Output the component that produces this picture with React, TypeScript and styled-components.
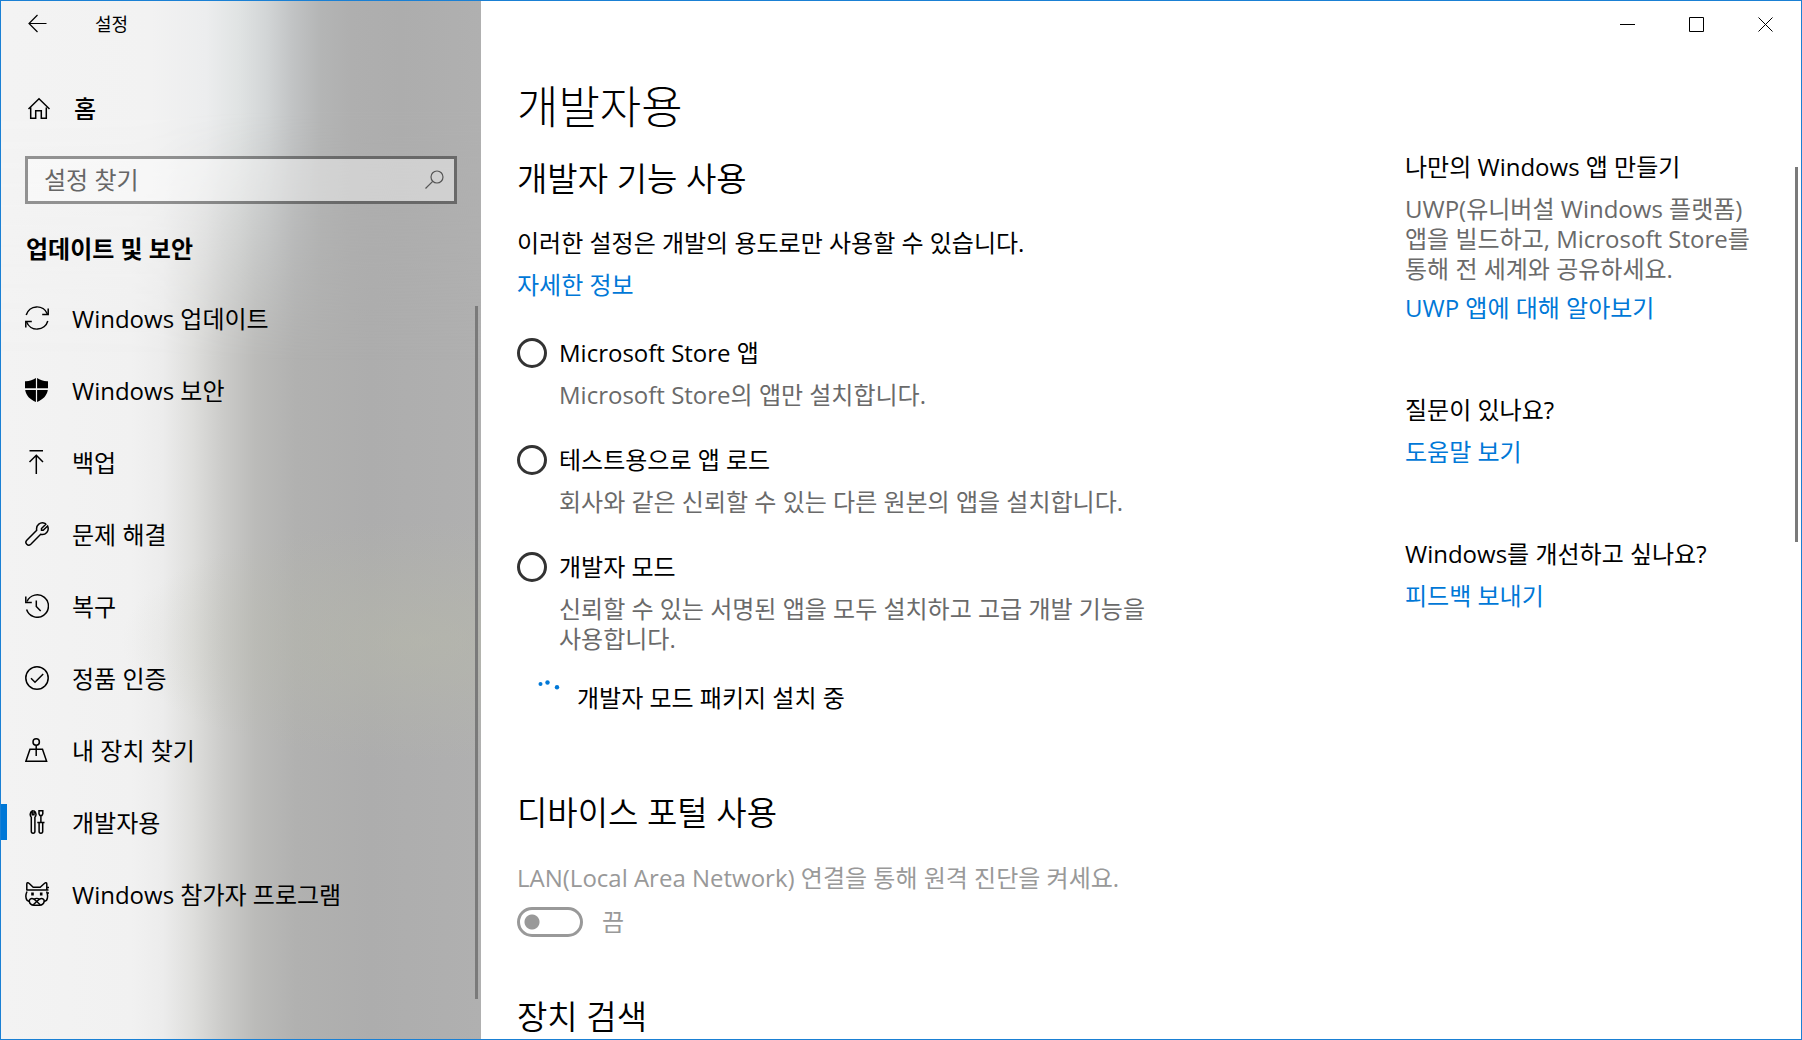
import React, { useState } from 'react';
import styled, { createGlobalStyle, css } from 'styled-components';

const accent = '#0078d7';

const GlobalStyle = createGlobalStyle`
  *, *::before, *::after { box-sizing: border-box; }
  body {
    margin: 0;
    background: #fff;
    color: #000;
    font-family: "Open Sans", "Noto Sans CJK KR", sans-serif;
    font-size: 24px;
    line-height: 30px;
    word-break: keep-all;
  }
  h1, h2, h3, p, ul { margin: 0; padding: 0; font-weight: inherit; }
  button, input { font: inherit; color: inherit; }
`;

const Window = styled.div`
  display: flex;
  height: 100vh;
  overflow: hidden;
  border: 1px solid #1a80d4;
`;

const Sidebar = styled.aside`
  position: relative;
  isolation: isolate;
  flex: none;
  display: flex;
  flex-direction: column;
  width: 480px;
  background:
    radial-gradient(ellipse 300px 120px at 420px 640px, rgba(184, 186, 170, 0.5), rgba(184, 186, 170, 0)),
    linear-gradient(90deg, #f3f3f3 0, #f1f1f1 130px, #ececec 162px, #dededc 192px, #cbcbc9 222px, #bbbbb9 254px, #b1b1b0 295px, #adadad 370px, #b0b0b0 100%);
  &::before {
    content: '';
    position: absolute;
    z-index: -1;
    inset: 0 0 auto;
    height: 360px;
    background: linear-gradient(90deg, #f3f3f3 0, #f2f2f2 150px, #ecedee 205px, #e0e3e3 238px, #d2d5d6 266px, #c1c3c4 292px, #b4b5b5 320px, #afafaf 350px, #adadad 400px, #b0b0b0 100%);
    mask-image: linear-gradient(#000 0, #000 110px, transparent 100%);
  }
`;

const TitleBar = styled.header`
  display: flex;
  align-items: center;
  height: 46px;
  padding-left: 23px;
  gap: 47px;
  font-size: 18px;
`;

const IconButton = styled.button`
  display: flex;
  padding: 0;
  border: 0;
  background: none;
`;

const HomeLink = styled.a`
  display: flex;
  align-items: center;
  gap: 23px;
  height: 72px;
  margin-top: 26px;
  padding-left: 26px;
  color: inherit;
  font-weight: 500;
  text-decoration: none;
`;

const SearchBox = styled.label`
  display: flex;
  align-items: center;
  height: 48px;
  margin: 11px 24px 0 24px;
  padding: 0 8px 0 16px;
  border: 3px solid rgba(0, 0, 0, 0.4);
  background: rgba(255, 255, 255, 0.42);
  background-clip: padding-box;
  svg { color: #555; }
`;

const SearchInput = styled.input`
  flex: 1;
  min-width: 0;
  padding: 0;
  border: 0;
  outline: 0;
  background: none;
  &::placeholder { color: #666; opacity: 1; }
`;

const SideHeading = styled.h2`
  margin: 30px 0 18px;
  padding-left: 25px;
  font-size: 24px;
  font-weight: 700;
`;

const NavList = styled.ul`
  list-style: none;
`;

const NavLink = styled.a<{ $active?: boolean }>`
  display: flex;
  align-items: center;
  gap: 23px;
  height: 72px;
  padding-left: 24px;
  color: inherit;
  text-decoration: none;
  ${(p) =>
    p.$active &&
    css`
      background: linear-gradient(${accent}, ${accent}) left center / 6px 36px no-repeat;
    `}
`;

const NavLabel = styled.span`
  padding-top: 2px;
`;

const Glyph = styled.svg`
  flex: none;
  display: block;
  width: 24px;
  height: 24px;
  fill: none;
  stroke: currentColor;
  stroke-width: 1.5;
`;

const ScrollThumb = styled.div<{ $top: number; $height: number; $right: number }>`
  position: absolute;
  top: ${(p) => p.$top}px;
  right: ${(p) => p.$right}px;
  width: 3px;
  height: ${(p) => p.$height}px;
  background: #7a7a7a;
`;

const Main = styled.main`
  position: relative;
  flex: 1;
  display: flex;
  flex-direction: column;
  min-width: 0;
`;

const Caption = styled.div`
  display: flex;
  justify-content: flex-end;
  height: 46px;
  padding-right: 1px;
`;

const CaptionButton = styled(IconButton)`
  align-items: center;
  justify-content: center;
  width: 69px;
  svg { width: 15px; height: 15px; stroke-width: 1; }
`;

const Page = styled.div`
  flex: 1;
  display: grid;
  grid-template-columns: minmax(0, 1fr) 396px;
  min-height: 0;
  padding-left: 36px;
`;

const Content = styled.div`
  overflow: hidden;
  height: 100%;
`;

const PageTitle = styled.h1`
  margin-top: 30px;
  font-size: 45px;
  font-weight: 300;
  line-height: 60px;
`;

const SectionTitle = styled.h2<{ $gap: number }>`
  margin-top: ${(p) => p.$gap}px;
  font-size: 33px;
  font-weight: 350;
  line-height: 40px;
`;

const Text = styled.p<{ $tone?: string; $gap?: number }>`
  margin-top: ${(p) => p.$gap ?? 0}px;
  color: ${(p) => p.$tone ?? 'inherit'};
`;

const TextLink = styled.a<{ $gap: number }>`
  display: table;
  margin-top: ${(p) => p.$gap}px;
  color: ${accent};
  text-decoration: none;
`;

const Options = styled.div`
  display: grid;
  gap: 35px;
  margin-top: 38px;
`;

const Option = styled.label`
  display: grid;
  grid-template-columns: 30px minmax(0, 620px);
  gap: 12px 12px;
  small { grid-column: 2; font-size: 24px; color: #6a6a6a; }
`;

const Radio = styled.input`
  appearance: none;
  width: 30px;
  height: 30px;
  margin: 0;
  border: 3px solid #333;
  border-radius: 50%;
  &:checked { background: radial-gradient(#333 7px, transparent 8px); }
`;

const Progress = styled.div`
  display: flex;
  gap: 10px;
  margin-top: 29px;
  padding-left: 20px;
`;

const Dots = styled.svg`
  width: 30px;
  height: 30px;
  overflow: visible;
  fill: ${accent};
`;

const ToggleRow = styled.label`
  display: flex;
  align-items: center;
  gap: 19px;
  margin-top: 14px;
  color: #999;
`;

const Toggle = styled.input`
  appearance: none;
  width: 66px;
  height: 30px;
  margin: 0;
  border: 3px solid #999;
  border-radius: 15px;
  background: radial-gradient(circle at 12px 12px, #999 7px, transparent 8px);
`;

const Help = styled.aside`
  padding: 105px 46px 0 0;
`;

const HelpBlock = styled.section`
  & + & { margin-top: 72px; }
  h3 { font-size: 24px; }
`;

const icons = {
  back: <path d="M22.500 11.500H5M13.500 3l-8.500 8.500 8.500 8.500" strokeWidth="1.200" />,
  home: <path d="M4 12 14.500 1.700 25 12M6.200 10.500v10.800h5v-7.500h5.600v7.500h5V10.500" transform="translate(-2.500 0)" />,
  search: (
    <>
      <circle cx="15" cy="9" r="6" strokeWidth="1.200" />
      <path d="M10.700 13.300 3.500 20.500" strokeWidth="1.200" />
    </>
  ),
  update: (
    <>
      <path d="M1.200 9A11.200 11.200 0 0 1 22.400 8M22.800 15A11.200 11.200 0 0 1 1.600 16" />
      <path d="M23.200 2.500V8.500H17.200M.8 21.500V15.500H6.800" />
    </>
  ),
  shield: (
    <path
      fill="currentColor"
      stroke="none"
      d="M0 3.200C4 3.400 8 2.200 10.900 0V10.300H0ZM12.100 0C15 2.200 19 3.400 23 3.200V10.300H12.100ZM.2 12H10.900V24C5 21.500 1 17.500.2 12ZM12.100 12H22.800C22 17.500 18 21.500 12.100 24Z"
    />
  ),
  backup: <path d="M4.500.8H18M11.300 24V5M4.500 12 11.300 5.200 18 12" />,
  wrench: (
    <path d="M20.800 2.200 16.500 6.500V8.200H18.200L22.600 4C24.700 8.800 20.500 13.500 15.700 12.300L5.800 22.200C3 24.800-.8 21 1.800 18.200L11.700 8.300C10.700 3 15.500-.6 20 1.400Z" />
  ),
  recovery: (
    <>
      <path d="M1.600 15.500A11.200 11.200 0 1 0 2 7.500" />
      <path d="M.8 2.500V8.500H6.800M11.300 6.500V12.500L15.700 17" />
    </>
  ),
  activation: (
    <>
      <circle cx="12" cy="12" r="11.200" />
      <path d="M6 12.300 10 16.300 18.200 8" />
    </>
  ),
  device: (
    <>
      <circle cx="11.200" cy="4" r="3.200" />
      <path d="M11.200 7.200V18M11.200 11.200H5L.9 23.200H21.600L17.500 11.200H11.200" />
    </>
  ),
  developer: (
    <>
      <path d="M7.200 1V4.800H9V1C11.500 2.300 11.500 5.800 9.900 7.300V21.500C9.900 23.800 6.300 23.800 6.300 21.500V7.300C4.700 5.800 4.700 2.300 7.200 1Z" />
      <path d="M14 .8H17.800V3.800L16.900 5.500H14.900L14 3.800ZM15.900 5.500V12.500M12.300 12.500H19.500M14.100 12.500V21.500C14.100 23.800 17.700 23.800 17.700 21.500V12.500" />
    </>
  ),
  insider: (
    <>
      <path d="M1.800 8.500V2C1.800.5 3.200.5 4 1.300L8.200 5.200H15.200L19.600 1.300C20.400.5 21.800.5 21.800 2V8.500M1.800 8H23.500M22 5.500H24M22 11H24M2 9.500C.4 13 .4 16 2.200 18.500L4.300 19.500C5 23.200 8 23.600 11.700 23.200 15.500 23.600 18.500 23.200 19.200 19.500L21.400 18.500C23 16 23 13 21.600 9.500" />
      <path d="M11.700 19.500 9.200 17.200C10.500 16.200 13 16.200 14.300 17.200ZM9.200 17.200C5.500 15.500 4 17.800 4.300 19.500M14.300 17.200C18 15.500 19.500 17.800 19.200 19.500M8.300 22.800 11.700 19.500 15.200 22.800" />
      <path d="M7.500 10.500V13.500M16.200 10.500V13.500" strokeWidth="2.600" />
    </>
  ),
  minimize: <path d="M0 7.500H15" />,
  maximize: <path d="M.5 .5H14.500V14.500H.5Z" />,
  close: <path d="M.5 .5 14.500 14.500M14.500 .5 .5 14.500" />,
};

type IconName = keyof typeof icons;

const Icon = ({ name, box = 24 }: { name: IconName; box?: number }) => (
  <Glyph viewBox={`0 0 ${box} ${box}`} aria-hidden="true">
    {icons[name]}
  </Glyph>
);

const navItems: { icon: IconName; label: string }[] = [
  { icon: 'update', label: 'Windows 업데이트' },
  { icon: 'shield', label: 'Windows 보안' },
  { icon: 'backup', label: '백업' },
  { icon: 'wrench', label: '문제 해결' },
  { icon: 'recovery', label: '복구' },
  { icon: 'activation', label: '정품 인증' },
  { icon: 'device', label: '내 장치 찾기' },
  { icon: 'developer', label: '개발자용' },
  { icon: 'insider', label: 'Windows 참가자 프로그램' },
];

const modes = [
  { id: 'store', label: 'Microsoft Store 앱', detail: 'Microsoft Store의 앱만 설치합니다.' },
  { id: 'sideload', label: '테스트용으로 앱 로드', detail: '회사와 같은 신뢰할 수 있는 다른 원본의 앱을 설치합니다.' },
  { id: 'developer', label: '개발자 모드', detail: '신뢰할 수 있는 서명된 앱을 모두 설치하고 고급 개발 기능을 사용합니다.' },
];

export default function App() {
  const [mode, setMode] = useState('');

  return (
    <>
      <GlobalStyle />
      <Window>
        <Sidebar>
          <TitleBar>
            <IconButton aria-label="뒤로">
              <Icon name="back" />
            </IconButton>
            <span>설정</span>
          </TitleBar>
          <HomeLink href="#home">
            <Icon name="home" />
            홈
          </HomeLink>
          <SearchBox>
            <SearchInput type="text" placeholder="설정 찾기" aria-label="설정 찾기" />
            <Icon name="search" />
          </SearchBox>
          <SideHeading>업데이트 및 보안</SideHeading>
          <nav>
            <NavList>
              {navItems.map((item) => (
                <li key={item.icon}>
                  <NavLink href={`#${item.icon}`} $active={item.icon === 'developer'}>
                    <Icon name={item.icon} />
                    <NavLabel>{item.label}</NavLabel>
                  </NavLink>
                </li>
              ))}
            </NavList>
          </nav>
          <ScrollThumb $top={305} $height={693} $right={3} />
        </Sidebar>
        <Main>
          <Caption>
            <CaptionButton aria-label="최소화">
              <Icon name="minimize" box={15} />
            </CaptionButton>
            <CaptionButton aria-label="최대화">
              <Icon name="maximize" box={15} />
            </CaptionButton>
            <CaptionButton aria-label="닫기">
              <Icon name="close" box={15} />
            </CaptionButton>
          </Caption>
          <Page>
            <Content>
              <PageTitle>개발자용</PageTitle>
              <SectionTitle $gap={22}>개발자 기능 사용</SectionTitle>
              <Text $gap={29}>이러한 설정은 개발의 용도로만 사용할 수 있습니다.</Text>
              <TextLink href="#more" $gap={12}>
                자세한 정보
              </TextLink>
              <Options>
                {modes.map((m) => (
                  <Option key={m.id}>
                    <Radio type="radio" name="mode" checked={mode === m.id} onChange={() => setMode(m.id)} />
                    <span>{m.label}</span>
                    <small>{m.detail}</small>
                  </Option>
                ))}
              </Options>
              <Progress role="status">
                <Dots viewBox="0 0 30 30" aria-hidden="true">
                  <circle cx="3.500" cy="1" r="2" />
                  <circle cx="10.500" cy="-.5" r="2.200" />
                  <circle cx="20" cy="4.200" r="2.200" />
                </Dots>
                개발자 모드 패키지 설치 중
              </Progress>
              <SectionTitle $gap={80}>디바이스 포털 사용</SectionTitle>
              <Text $tone="#999" $gap={30}>
                LAN(Local Area Network) 연결을 통해 원격 진단을 켜세요.
              </Text>
              <ToggleRow>
                <Toggle type="checkbox" role="switch" disabled />
                끔
              </ToggleRow>
              <SectionTitle $gap={60}>장치 검색</SectionTitle>
            </Content>
            <Help>
              <HelpBlock>
                <h3>나만의 Windows 앱 만들기</h3>
                <Text $tone="#6a6a6a" $gap={12}>
                  UWP(유니버설 Windows 플랫폼) 앱을 빌드하고, Microsoft Store를 통해 전 세계와 공유하세요.
                </Text>
                <TextLink href="#uwp" $gap={9}>
                  UWP 앱에 대해 알아보기
                </TextLink>
              </HelpBlock>
              <HelpBlock>
                <h3>질문이 있나요?</h3>
                <TextLink href="#help" $gap={12}>
                  도움말 보기
                </TextLink>
              </HelpBlock>
              <HelpBlock>
                <h3>Windows를 개선하고 싶나요?</h3>
                <TextLink href="#feedback" $gap={12}>
                  피드백 보내기
                </TextLink>
              </HelpBlock>
            </Help>
          </Page>
          <ScrollThumb $top={166} $height={375} $right={3} />
        </Main>
      </Window>
    </>
  );
}
